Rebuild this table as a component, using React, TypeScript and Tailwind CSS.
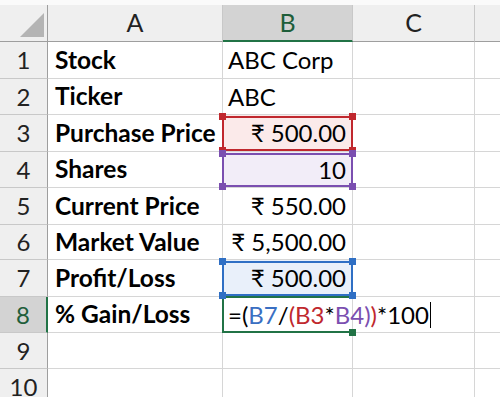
import React from "react";

type Mark = "red" | "purple" | "blue" | "green";

type RowData = {
  label: string;
  value?: React.ReactNode;
  align?: "left" | "right";
  mark?: Mark;
};

const rowHeights = [37, 36, 37, 36, 37, 35, 37, 36, 36, 36];

const markStyles: Record<Mark, { fill: string; line: string; box: string }> = {
  red: { fill: "bg-[#fbeaea]", line: "border-[#c0282e]", box: "bg-[#c0282e]" },
  purple: { fill: "bg-[#f2edf8]", line: "border-[#7b4fb0]", box: "bg-[#7b4fb0]" },
  blue: { fill: "bg-[#e9f0fa]", line: "border-[#2f6fc4]", box: "bg-[#2f6fc4]" },
  green: { fill: "bg-white", line: "border-[#217346]", box: "bg-[#217346]" },
};

// =(B7/(B3*B4))*100 with each reference in its range colour
const Formula = () => (
  <span className="whitespace-nowrap">
    =(<span className="text-[#3a6fc2]">B7</span>/
    <span className="text-[#c0282e]">(B3</span>*
    <span className="text-[#7b4fb0]">B4)</span>
    <span className="text-[#c0282e]">)</span>*100
    <span className="inline-block w-[1.5px] h-[26px] bg-black align-middle ml-[1px] -mt-[4px]" />
  </span>
);

const rows: RowData[] = [
  { label: "Stock", value: "ABC Corp" },
  { label: "Ticker", value: "ABC" },
  { label: "Purchase Price", value: "₹ 500.00", align: "right", mark: "red" },
  { label: "Shares", value: "10", align: "right", mark: "purple" },
  { label: "Current Price", value: "₹ 550.00", align: "right" },
  { label: "Market Value", value: "₹ 5,500.00", align: "right" },
  { label: "Profit/Loss", value: "₹ 500.00", align: "right", mark: "blue" },
  { label: "% Gain/Loss", value: <Formula />, mark: "green" },
  { label: "" },
  { label: "" },
];

const Handle = ({ cls, pos }: { cls: string; pos: string }) => (
  <span className={`absolute w-[7px] h-[7px] z-20 ${cls} ${pos}`} />
);

const Selection = ({ mark }: { mark: Mark }) => {
  const s = markStyles[mark];
  if (mark === "green") {
    return (
      <>
        <span className={`absolute -left-[1px] -top-[1px] bottom-[-1px] right-0 border-l-2 border-t-2 border-b-2 ${s.line}`} />
        <Handle cls={s.box} pos="-right-[4px] -bottom-[4px]" />
      </>
    );
  }
  return (
    <>
      <span className={`absolute -left-[1px] -right-[1px] top-[1px] bottom-0 border-2 ${s.line}`} />
      <Handle cls={s.box} pos="-left-[4px] -top-[2px]" />
      <Handle cls={s.box} pos="-right-[4px] -top-[2px]" />
      <Handle cls={s.box} pos="-left-[4px] -bottom-[3px]" />
      <Handle cls={s.box} pos="-right-[4px] -bottom-[3px]" />
    </>
  );
};

export default function App() {
  const font = { fontFamily: "Lato, 'Open Sans', sans-serif" };
  return (
    <div className="w-[500px] h-[397px] overflow-hidden bg-white text-black" style={font}>
      {/* column headers */}
      <div className="flex h-[42px] pt-[5px] bg-[#fafafa]">
        <div className="w-[48px] shrink-0 bg-[#efefef] border-r border-b border-[#9e9e9e] relative">
          <svg className="absolute left-[20px] top-[8px]" width="24" height="24" viewBox="0 0 24 24">
            <polygon points="24,0 24,24 0,24" fill="#b4b4b4" />
          </svg>
        </div>
        <div className="w-[175px] shrink-0 bg-[#efefef] border-r border-b border-[#c8c8c8] border-b-[#9e9e9e] flex items-center justify-center text-[25px] text-[#222]">
          A
        </div>
        <div className="w-[130px] shrink-0 bg-[#d3d3d3] border-r border-[#c8c8c8] border-b-2 border-b-[#217346] flex items-center justify-center text-[25px] text-[#1e5e3a]">
          B
        </div>
        <div className="w-[122px] shrink-0 bg-[#efefef] border-r border-b border-[#c8c8c8] border-b-[#9e9e9e] flex items-center justify-center text-[25px] text-[#222]">
          C
        </div>
        <div className="flex-1 bg-[#efefef] border-b border-[#9e9e9e]" />
      </div>

      {rows.map((row, i) => {
        const active = i === 7;
        const mark = row.mark ? markStyles[row.mark] : null;
        return (
          <div key={i} className="flex" style={{ height: rowHeights[i] }}>
            <div
              className={`w-[48px] shrink-0 flex items-center justify-center text-[24px] border-b border-[#c8c8c8] ${
                active
                  ? "bg-[#d3d3d3] text-[#1e5e3a] border-r-2 border-r-[#217346]"
                  : "bg-[#efefef] text-[#222] border-r border-r-[#9e9e9e]"
              }`}
            >
              {i + 1}
            </div>
            <div className="w-[175px] shrink-0 flex items-center pl-[7px] font-bold text-[24.5px] border-r border-b border-[#d6d6d6] whitespace-nowrap">
              {row.label}
            </div>
            <div
              className={`w-[130px] shrink-0 relative flex items-center text-[24px] border-r border-b border-[#d6d6d6] ${
                mark ? mark.fill : ""
              } ${row.align === "right" ? "justify-end pr-[6px]" : "pl-[5px]"}`}
            >
              <span className="relative z-10 whitespace-nowrap">{row.value}</span>
              {row.mark && <Selection mark={row.mark} />}
            </div>
            <div className="w-[122px] shrink-0 border-r border-b border-[#d6d6d6]" />
            <div className="flex-1 border-b border-[#d6d6d6]" />
          </div>
        );
      })}
    </div>
  );
}
